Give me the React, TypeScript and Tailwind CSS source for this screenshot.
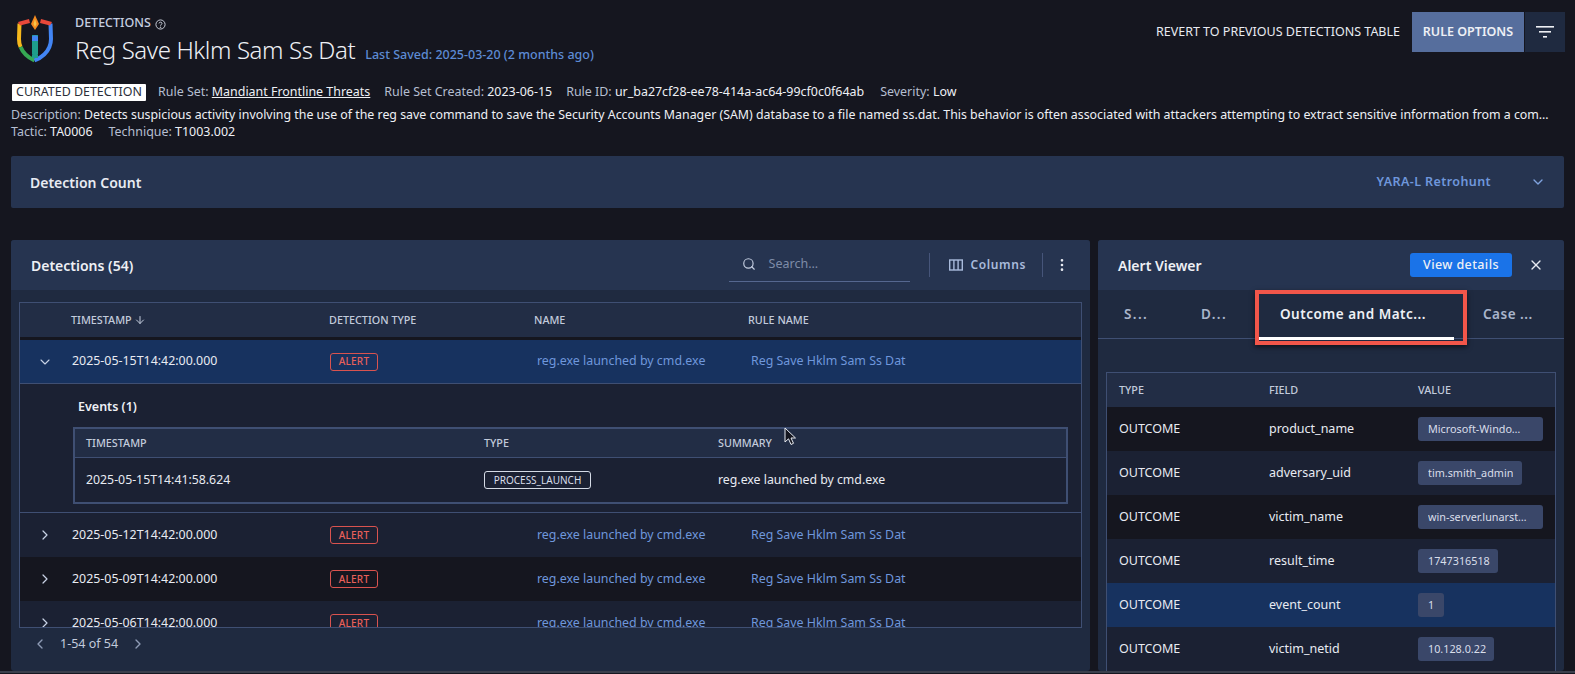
import React from "react";
import { ChevronDown, ChevronRight, ChevronLeft, Search, X, EllipsisVertical, ArrowDown } from "lucide-react";

const FONT = "[font-family:'Noto_Sans',sans-serif]";

function Logo() {
  return (
    <svg width="36" height="48" viewBox="0 0 36 48" fill="none" className="shrink-0">
      <path d="M2.5 8.5 L2 24 C2 27 2.4 29.5 3.6 32" stroke="#f6b81c" strokeWidth="4" />
      <path d="M3.6 32 C6 38 11 42.5 17.5 45.5" stroke="#36a853" strokeWidth="4" />
      <path d="M17.5 45.5 C25 42.5 30 38 32.4 32 C33.6 29 34 27 34 24 L33.5 8.5" stroke="#4285f4" strokeWidth="4" />
      <path d="M1 7 L12 4 L13 8 L3 10.5 Z" fill="#e8483a" />
      <path d="M35 7 L24 4 L23 8 L33 10.5 Z" fill="#e8483a" />
      <path d="M18 0 L22 9 L18 15 L14 9 Z" fill="#f58a1f" />
      <path d="M18 4 L19.5 9 L18 12 L16.5 9 Z" fill="#f9c64a" />
      <rect x="15" y="20" width="6" height="23" fill="#1e9d8b" />
      <path d="M15 22 C15 20 21 20 21 22 L21 26 L15 26 Z" fill="#4285f4" />
      <path d="M8 17 L8 30 C9 34 12 38 15 40" stroke="#15161f" strokeWidth="1.5" />
      <path d="M28 17 L28 30 C27 34 24 38 21 40" stroke="#15161f" strokeWidth="1.5" />
    </svg>
  );
}

function Alert() {
  return (
    <span className="inline-flex items-center justify-center w-[48px] h-[18px] rounded-[3px] border border-[#d9534f] text-[#e8605a] text-[10px] font-medium tracking-[0.2px]">
      ALERT
    </span>
  );
}

function Row({ open, date, bg }: { open?: boolean; date: string; bg: string }) {
  return (
    <div className={`flex items-center h-[44px] shrink-0 ${bg} ${open ? "border-b border-[#3f4f73]" : ""}`}>
      <div className="w-[50px] flex justify-center text-[#c9d3e6]">
        {open ? <ChevronDown size={16} strokeWidth={1.6} /> : <ChevronRight size={16} strokeWidth={1.8} />}
      </div>
      <div className="w-[260px] pl-[2px] text-[12.4px] text-[#e8ebf2]">{date}</div>
      <div className="w-[207px] flex items-center"><Alert /></div>
      <div className="w-[214px] text-[12.4px] text-[#6f97dc]">reg.exe launched by cmd.exe</div>
      <div className="text-[12.4px] text-[#6f97dc]">Reg Save Hklm Sam Ss Dat</div>
    </div>
  );
}

function Meta({ label, children }: { label: string; children: React.ReactNode }) {
  return (
    <span className="text-[#b5bfd1]">
      {label} <span className="text-[#eef0f5]">{children}</span>
    </span>
  );
}

function Outcome({ field, value, chipW, bg }: { field: string; value: string; chipW: string; bg: string }) {
  return (
    <div className={`flex items-center h-[44px] shrink-0 text-[12.5px] text-[#e8ebf2] ${bg}`}>
      <div className="w-[162px] pl-[12px]">OUTCOME</div>
      <div className="w-[149px]">{field}</div>
      <div className={`h-[24px] rounded-[3px] bg-[#3a4769] pl-[10px] flex items-center text-[10.8px] text-[#d9deea] ${chipW}`}>
        <span className="truncate">{value}</span>
      </div>
    </div>
  );
}

export default function App() {
  return (
    <div className={`relative w-[1575px] h-[674px] overflow-hidden bg-[#15161f] ${FONT} flex flex-col`}>
      {/* top header */}
      <div className="flex items-start h-[80px] shrink-0">
        <div className="ml-[17px] mt-[15px]"><Logo /></div>
        <div className="ml-[22px] mt-[14px]">
          <div className="flex items-center gap-[4px] h-[18px] text-[12.5px] font-medium text-[#c5cfe0]">
            DETECTIONS
            <svg width="11" height="11" viewBox="0 0 12 12" fill="none" stroke="#d5dbe6" strokeWidth="1" className="mt-[2px]">
              <circle cx="6" cy="6" r="5" />
              <path d="M4.4 4.8 C4.4 3 7.6 3 7.6 4.8 C7.6 6 6 6 6 7.3" />
              <circle cx="6" cy="9" r="0.4" />
            </svg>
          </div>
          <div className="flex items-baseline">
            <span className="text-[24px] font-light tracking-[-0.4px] text-[#eef0f5] leading-[36px]">Reg Save Hklm Sam Ss Dat</span>
            <span className="ml-[10px] text-[12.5px] font-medium text-[#5d8bd4]">Last Saved: 2025-03-20 (2 months ago)</span>
          </div>
        </div>
        <div className="ml-auto mt-[12px] flex items-center mr-[10px]">
          <span className="text-[12.5px] text-[#e8ebf2] mr-[12px]">REVERT TO PREVIOUS DETECTIONS TABLE</span>
          <button className="w-[112px] h-[40px] bg-[#566e9d] text-[12.5px] font-semibold text-[#eef0f5]">RULE OPTIONS</button>
          <button className="w-[40px] h-[40px] ml-[1px] bg-[#1f2a40] flex items-center justify-center">
            <svg width="18" height="12" viewBox="0 0 18 12" fill="#eef0f5">
              <rect x="0" y="0" width="18" height="1.6" />
              <rect x="3" y="5" width="12" height="1.6" />
              <rect x="7" y="10" width="4" height="1.6" />
            </svg>
          </button>
        </div>
      </div>

      {/* metadata */}
      <div className="pl-[11px] text-[12.45px] shrink-0">
        <div className="flex items-center h-[24px]">
          <span className="ml-[1px] h-[17px] w-[134px] flex items-center justify-center bg-white text-[#2a2f3a] rounded-[1px]">CURATED DETECTION</span>
          <span className="ml-[12px] text-[#b5bfd1]">Rule Set: <span className="underline text-[#eef0f5]">Mandiant Frontline Threats</span></span>
          <span className="ml-[14px]"><Meta label="Rule Set Created:">2023-06-15</Meta></span>
          <span className="ml-[14px]"><Meta label="Rule ID:">ur_ba27cf28-ee78-414a-ac64-99cf0c0f64ab</Meta></span>
          <span className="ml-[16px]"><Meta label="Severity:">Low</Meta></span>
        </div>
        <div className="mt-[2px] h-[18px] leading-[18px] truncate w-[1539px] text-[12.36px] text-[#eef0f5]">
          <Meta label="Description:">Detects suspicious activity involving the use of the reg save command to save the Security Accounts Manager (SAM) database to a file named ss.dat. This behavior is often associated with attackers attempting to extract sensitive information from a compromised system.</Meta>
        </div>
        <div className="h-[16px] leading-[16px] flex gap-[16px]">
          <Meta label="Tactic:">TA0006</Meta>
          <Meta label="Technique:">T1003.002</Meta>
        </div>
      </div>

      {/* detection count */}
      <div className="mx-[11px] mt-[16px] h-[52px] shrink-0 bg-[#263450] flex items-center rounded-[2px] pl-[19px] pr-[18px]">
        <span className="text-[14px] font-semibold text-[#e8ebf2]">Detection Count</span>
        <span className="ml-auto text-[12.5px] font-semibold tracking-[0.4px] text-[#6f97dc]">YARA-L Retrohunt</span>
        <ChevronDown size={16} className="ml-[39px] text-[#7fa3e0]" />
      </div>

      {/* panels */}
      <div className="flex gap-[8px] px-[11px] mt-[32px] h-[431px] shrink-0">
        {/* left */}
        <div className="w-[1079px] bg-[#1f2a40] rounded-[3px] flex flex-col overflow-hidden">
          <div className="h-[50px] shrink-0 bg-[#263450] flex items-center pl-[20px]">
            <span className="text-[14px] font-semibold text-[#eef0f5]">Detections (54)</span>
            <div className="ml-auto flex items-center">
              <div className="w-[181px] h-[36px] mb-[3px] pt-[2px] border-b border-[#55678f] flex items-center pl-[13px]">
                <Search size={14} className="text-[#c3cde0]" />
                <span className="ml-[13px] text-[12.5px] text-[#7e8ca8]">Search...</span>
              </div>
              <div className="w-[1px] h-[24px] bg-[#46557a] ml-[19px]" />
              <svg width="14" height="12" viewBox="0 0 14 12" fill="none" stroke="#a9bbdc" strokeWidth="1.4" className="ml-[19px]">
                <rect x="0.7" y="1" width="12.6" height="10" />
                <path d="M4.9 1V11M9.1 1V11" />
              </svg>
              <span className="ml-[8px] text-[12px] font-semibold tracking-[0.6px] text-[#a9bbdc]">Columns</span>
              <div className="w-[1px] h-[24px] bg-[#46557a] ml-[16px]" />
              <EllipsisVertical size={16} className="ml-[11px] mr-[20px] text-[#e8ebf2]" />
            </div>
          </div>

          <div className="mx-[8px] mt-[12px] h-[326px] shrink-0 border border-[#3f4f73] overflow-hidden flex flex-col">
            <div className="flex items-center h-[37px] shrink-0 bg-[#222d45] border-b-[3px] border-[#15161f] text-[10.8px] font-medium text-[#c2cbdc]">
              <div className="w-[51px]" />
              <div className="w-[258px] flex items-center gap-[2px]">TIMESTAMP <ArrowDown size={12} /></div>
              <div className="w-[205px]">DETECTION TYPE</div>
              <div className="w-[214px]">NAME</div>
              <div>RULE NAME</div>
            </div>
            <Row open date="2025-05-15T14:42:00.000" bg="bg-[#17325f]" />
            <div className="shrink-0 h-[129px] bg-[#1b2133] border-b border-[#3f4f73] pl-[53px] pr-[13px]">
              <div className="h-[43px] pt-[4px] pl-[5px] flex items-center text-[12.5px] font-semibold text-[#eef0f5]">Events (1)</div>
              <div className="border-2 border-[#3f4f73] h-[77px]">
                <div className="flex items-center h-[29px] bg-[#222d45] border-b border-[#3f4f73] text-[10.8px] font-medium text-[#c2cbdc]">
                  <div className="w-[409px] pl-[11px]">TIMESTAMP</div>
                  <div className="w-[234px]">TYPE</div>
                  <div>SUMMARY</div>
                </div>
                <div className="flex items-center h-[44px] text-[12.3px] text-[#e8ebf2]">
                  <div className="w-[409px] pl-[11px]">2025-05-15T14:41:58.624</div>
                  <div className="w-[234px] flex items-center">
                    <span className="inline-flex items-center justify-center w-[107px] h-[18px] rounded-[3px] border border-[#d5dbe6] text-[10px] text-[#d9deea]">PROCESS_LAUNCH</span>
                  </div>
                  <div>reg.exe launched by cmd.exe</div>
                </div>
              </div>
            </div>
            <Row date="2025-05-12T14:42:00.000" bg="bg-[#1b2133]" />
            <Row date="2025-05-09T14:42:00.000" bg="bg-[#15161f]" />
            <Row date="2025-05-06T14:42:00.000" bg="bg-[#1b2133]" />
          </div>

          <div className="flex items-center h-[32px] pl-[21px] text-[12.5px] text-[#c2cbdc]">
            <ChevronLeft size={16} className="text-[#8e9bb5]" />
            <span className="ml-[12px]">1-54 of 54</span>
            <ChevronRight size={16} className="ml-[12px] text-[#8e9bb5]" />
          </div>
        </div>

        {/* right */}
        <div className="w-[466px] h-[431px] bg-[#1f2a40] rounded-[3px] flex flex-col overflow-hidden">
          <div className="h-[50px] shrink-0 bg-[#263450] flex items-center pl-[20px]">
            <span className="text-[14px] font-semibold text-[#eef0f5]">Alert Viewer</span>
            <button className="ml-auto w-[102px] h-[24px] rounded-[3px] bg-[#1a73e8] text-[12.5px] font-medium tracking-[0.4px] text-[#eef0f5]">View details</button>
            <X size={16} className="ml-[16px] mr-[20px] text-[#e8ebf2]" />
          </div>

          <div className="relative h-[49px] shrink-0 border-b border-[#3f4f73] flex items-center text-[13.5px] font-semibold tracking-[0.5px] text-[#a9b5cb]">
            <span className="ml-[26px] w-[77px] tracking-[1.4px]">S...</span>
            <span className="w-[61px] tracking-[1.4px]">D...</span>
            <span className="w-[216px] pl-[18px] text-[#eef0f5]">Outcome and Matc...</span>
            <span className="ml-[5px]">Case ...</span>
            {/* highlight overlay */}
            <div className="absolute left-[157px] top-0 w-[212px] h-[55px] border-[4px] border-[#f2564a] shadow-[0_2px_5px_rgba(0,0,0,0.6)]">
              <div className="absolute left-0 top-[43px] w-[195px] h-[3px] bg-white" />
            </div>
          </div>

          <div className="mx-[8px] mt-[33px] border border-[#3f4f73] border-b-0 flex flex-col">
            <div className="flex items-center h-[34px] shrink-0 bg-[#222d45] text-[10.8px] font-medium text-[#c2cbdc]">
              <div className="w-[162px] pl-[12px]">TYPE</div>
              <div className="w-[149px]">FIELD</div>
              <div>VALUE</div>
            </div>
            <Outcome field="product_name" value="Microsoft-Windows-Security-Auditing" chipW="w-[125px] pr-[16px]" bg="bg-[#15161f]" />
            <Outcome field="adversary_uid" value="tim.smith_admin" chipW="w-fit pr-[9px]" bg="bg-[#1b2133]" />
            <Outcome field="victim_name" value="win-server.lunarstiiiness.com" chipW="w-[125px] pr-[16px]" bg="bg-[#15161f]" />
            <Outcome field="result_time" value="1747316518" chipW="w-fit pr-[8px]" bg="bg-[#1b2133]" />
            <Outcome field="event_count" value="1" chipW="w-[26px]" bg="bg-[#17325f]" />
            <Outcome field="victim_netid" value="10.128.0.22" chipW="w-fit pr-[8px]" bg="bg-[#1b2133]" />
          </div>
        </div>
      </div>

      {/* bottom edge */}
      <div className="h-[2px] shrink-0 bg-[#3a3f4c]" />

      {/* mouse pointer */}
      <svg width="13" height="19" viewBox="0 0 13 19" className="absolute left-[784px] top-[427px]">
        <path d="M1 1 L1 15 L4.5 11.8 L7 17.5 L9.5 16.3 L7 11 L11.5 11 Z" fill="#15161f" stroke="#e8ebf2" strokeWidth="1" />
      </svg>
    </div>
  );
}
